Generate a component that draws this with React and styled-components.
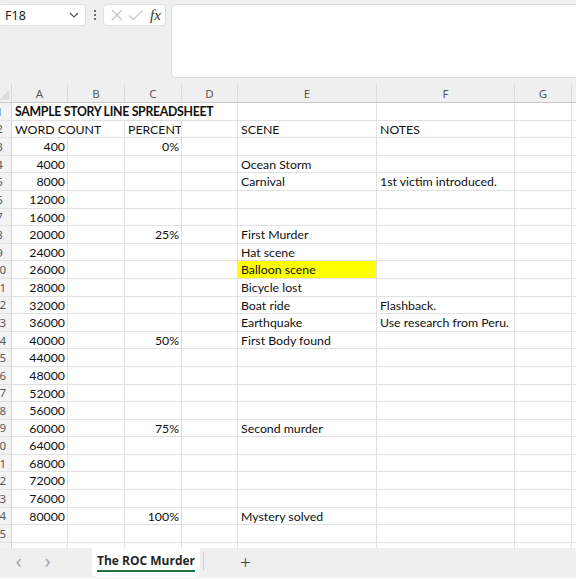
import React from "react";
import styled, { createGlobalStyle } from "styled-components";

const GlobalStyle = createGlobalStyle`
  html, body {
    margin: 0;
    padding: 0;
    background: #ffffff;
    overflow: hidden;
  }
  * { box-sizing: border-box; }
`;

const COLS = [24, 56, 57, 57, 56, 139, 138, 57, 80];
const LETTERS = ["A", "B", "C", "D", "E", "F", "G", ""];

const rows = [
  { a: "SAMPLE STORY LINE SPREADSHEET", bold: true, spanA: 4 },
  { a: "WORD COUNT", spanA: 2, c: "PERCENT", cLeft: true, e: "SCENE", f: "NOTES" },
  { a: "400", c: "0%" },
  { a: "4000", e: "Ocean Storm" },
  { a: "8000", e: "Carnival", f: "1st victim introduced." },
  { a: "12000" },
  { a: "16000" },
  { a: "20000", c: "25%", e: "First Murder" },
  { a: "24000", e: "Hat scene" },
  { a: "26000", e: "Balloon scene", yellow: true },
  { a: "28000", e: "Bicycle lost" },
  { a: "32000", e: "Boat ride", f: "Flashback." },
  { a: "36000", e: "Earthquake", f: "Use research from Peru." },
  { a: "40000", c: "50%", e: "First Body found" },
  { a: "44000" },
  { a: "48000" },
  { a: "52000" },
  { a: "56000" },
  { a: "60000", c: "75%", e: "Second murder" },
  { a: "64000" },
  { a: "68000" },
  { a: "72000" },
  { a: "76000" },
  { a: "80000", c: "100%", e: "Mystery solved" },
  {},
  {},
];

export default function App() {
  return (
    <>
      <GlobalStyle />
      <Window>
        <TopBar>
          <NameBox>
            <span>F18</span>
            <svg width="10" height="6" viewBox="0 0 10 6">
              <path d="M1 1 L5 5 L9 1" fill="none" stroke="#555" strokeWidth="1.2" />
            </svg>
          </NameBox>
          <Dots>
            <i /><i /><i />
          </Dots>
          <FuncBox>
            <svg width="14" height="14" viewBox="0 0 14 14">
              <path d="M2 2 L12 12 M12 2 L2 12" stroke="#c4c4c4" strokeWidth="1.2" />
            </svg>
            <svg width="16" height="14" viewBox="0 0 16 14">
              <path d="M1.5 7.5 L5.5 11.5 L14.5 2.5" fill="none" stroke="#c4c4c4" strokeWidth="1.2" />
            </svg>
            <Fx>fx</Fx>
          </FuncBox>
          <FormulaInput />
        </TopBar>

        <Sheet>
          <Grid>
            <Corner>
              <svg width="10" height="10" viewBox="0 0 10 10">
                <path d="M10 0 L10 10 L0 10 Z" fill="#dcdcdc" />
              </svg>
            </Corner>
            {LETTERS.map((l, i) => (
              <ColHead key={i}>{l}</ColHead>
            ))}
            {rows.map((r, i) => (
              <React.Fragment key={i}>
                <RowHead>{i + 1}</RowHead>
                <Cell $span={r.spanA || 1} $align={r.spanA ? "left" : "right"} $bold={r.bold}>
                  {r.a}
                </Cell>
                {!r.spanA && <Cell />}
                {(!r.spanA || r.spanA < 3) && (
                  <Cell $align={r.cLeft ? "left" : "right"}>{r.c}</Cell>
                )}
                {(!r.spanA || r.spanA < 4) && <Cell />}
                <Cell $yellow={r.yellow}>{r.e}</Cell>
                <Cell>{r.f}</Cell>
                <Cell />
                <Cell />
              </React.Fragment>
            ))}
          </Grid>
        </Sheet>

        <TabBar>
          <NavArrow>‹</NavArrow>
          <NavArrow>›</NavArrow>
          <SheetTab>
            <TabLabel>The ROC Murder</TabLabel>
          </SheetTab>
          <TabDivider />
          <AddSheet>+</AddSheet>
        </TabBar>
        <BottomStrip />
      </Window>
    </>
  );
}

const Window = styled.div`
  width: 576px;
  height: 579px;
  display: flex;
  flex-direction: column;
  overflow: hidden;
  font-family: "Noto Sans", "Liberation Sans", sans-serif;
`;

const TopBar = styled.div`
  height: 84px;
  flex-shrink: 0;
  background: #efefef;
  display: flex;
  align-items: flex-start;
  padding-top: 4px;
  margin-left: -2px;
`;

const NameBox = styled.div`
  width: 88px;
  height: 22px;
  background: #ffffff;
  border: 1px solid #e0e0e0;
  border-radius: 4px;
  display: flex;
  align-items: center;
  justify-content: space-between;
  padding: 0 6px 0 6px;
  font-size: 12.5px;
  color: #222;
`;

const Dots = styled.div`
  width: 17px;
  height: 22px;
  display: flex;
  flex-direction: column;
  align-items: center;
  justify-content: center;
  gap: 2px;
  i {
    width: 2px;
    height: 2px;
    background: #444;
    border-radius: 1px;
  }
`;

const FuncBox = styled.div`
  width: 63px;
  height: 22px;
  background: #ffffff;
  border: 1px solid #e0e0e0;
  border-radius: 4px;
  display: flex;
  align-items: center;
  gap: 4px;
  padding: 0 4px 0 6px;
`;

const Fx = styled.span`
  font-family: "Liberation Serif", serif;
  font-style: italic;
  font-size: 15px;
  color: #333;
  margin-left: 2px;
`;

const FormulaInput = styled.div`
  flex: 1;
  height: 74px;
  margin-left: 5px;
  margin-right: -6px;
  background: #ffffff;
  border: 1px solid #dedede;
  border-radius: 5px;
`;

const Sheet = styled.div`
  flex: 1;
  overflow: hidden;
  background: #ffffff;
`;

const Grid = styled.div`
  display: grid;
  grid-template-columns: ${COLS.map((c) => c + "px").join(" ")};
  grid-template-rows: 19px;
  grid-auto-rows: 17.6px;
  margin-left: -12px;
`;

const Corner = styled.div`
  background: #efefef;
  border-right: 1px solid #d6d6d6;
  border-bottom: 1px solid #c8c8c8;
  display: flex;
  align-items: flex-end;
  justify-content: flex-end;
  padding: 0 2px 2px 0;
`;

const ColHead = styled.div`
  background: #efefef;
  border-right: 1px solid #dcdcdc;
  border-bottom: 1px solid #c8c8c8;
  color: #5a5a5a;
  font-size: 11.5px;
  display: flex;
  align-items: center;
  justify-content: center;
`;

const RowHead = styled.div`
  background: #f3f3f3;
  border-right: 1px solid #d6d6d6;
  border-bottom: 1px solid #e2e2e2;
  color: #5a5a5a;
  font-size: 11.5px;
  display: flex;
  align-items: center;
  justify-content: center;
`;

const Cell = styled.div`
  grid-column: span ${(p) => p.$span || 1};
  border-right: 1px solid #e1e1e1;
  border-bottom: 1px solid #e1e1e1;
  background: ${(p) => (p.$yellow ? "#ffff00" : "#ffffff")};
  font-family: Lato, "Open Sans", sans-serif;
  font-size: 12.3px;
  font-weight: ${(p) => (p.$bold ? 700 : 400)};
  letter-spacing: ${(p) => (p.$bold ? "-0.3px" : "0")};
  color: #111;
  text-align: ${(p) => p.$align || "left"};
  padding: 1px 2px 0 3px;
  line-height: 16.5px;
  white-space: nowrap;
  overflow: hidden;
`;

const TabBar = styled.div`
  height: 29px;
  flex-shrink: 0;
  background: #efefef;
  display: flex;
  align-items: stretch;
  padding-left: 4px;
`;

const NavArrow = styled.div`
  width: 29px;
  display: flex;
  align-items: center;
  justify-content: center;
  color: #a8a8a8;
  font-size: 20px;
  line-height: 1;
  padding-bottom: 3px;
`;

const SheetTab = styled.div`
  margin-left: 30px;
  width: 108px;
  background: #ffffff;
  border-radius: 0 0 6px 6px;
  display: flex;
  align-items: flex-start;
  justify-content: center;
  padding-top: 5px;
`;

const TabLabel = styled.span`
  font-family: "Open Sans", "Noto Sans", sans-serif;
  font-weight: 700;
  font-size: 12px;
  color: #262626;
  padding-bottom: 1px;
  border-bottom: 2px solid #1e7145;
  line-height: 16px;
`;

const TabDivider = styled.div`
  width: 1px;
  margin: 4px 0 6px 3px;
  background: #cfcfcf;
`;

const AddSheet = styled.div`
  margin-left: 36px;
  display: flex;
  align-items: center;
  color: #444;
  font-size: 19px;
  font-weight: 300;
  padding-bottom: 2px;
`;

const BottomStrip = styled.div`
  height: 2px;
  flex-shrink: 0;
  background: #f7f7f7;
`;
